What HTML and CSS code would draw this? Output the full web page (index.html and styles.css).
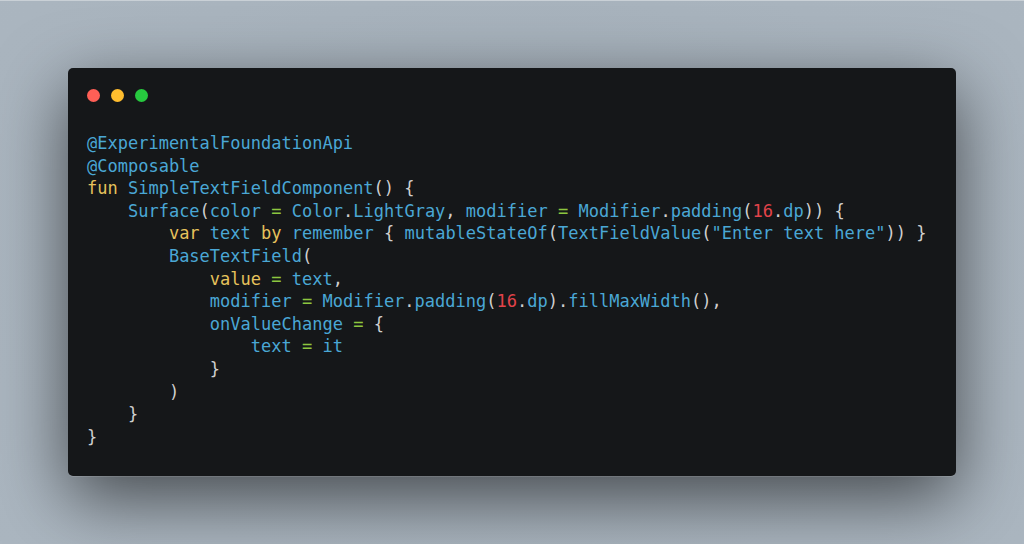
FILE: index.html
```html
<!DOCTYPE html>
<html>
<head>
<meta charset="utf-8">
<link rel="stylesheet" href="styles.css">
</head>
<body>
<div class="window">
  <div class="dots">
    <span class="dot red"></span>
    <span class="dot yellow"></span>
    <span class="dot green"></span>
  </div>
<pre class="code"><span class="b">@ExperimentalFoundationApi</span>
<span class="b">@Composable</span>
<span class="y">fun</span> <span class="b">SimpleTextFieldComponent</span><span class="p">() {</span>
    <span class="b">Surface</span><span class="p">(</span><span class="b">color</span> <span class="g">=</span> <span class="b">Color</span><span class="p">.</span><span class="b">LightGray</span><span class="p">,</span> <span class="b">modifier</span> <span class="g">=</span> <span class="b">Modifier</span><span class="p">.</span><span class="b">padding</span><span class="p">(</span><span class="r">16</span><span class="p">.</span><span class="b">dp</span><span class="p">)) {</span>
        <span class="y">var</span> <span class="b">text</span> <span class="y">by</span> <span class="b">remember</span> <span class="p">{</span> <span class="b">mutableStateOf</span><span class="p">(</span><span class="b">TextFieldValue</span><span class="p">(</span><span class="b">"Enter text here"</span><span class="p">)) }</span>
        <span class="b">BaseTextField</span><span class="p">(</span>
            <span class="y">value</span> <span class="g">=</span> <span class="b">text</span><span class="p">,</span>
            <span class="b">modifier</span> <span class="g">=</span> <span class="b">Modifier</span><span class="p">.</span><span class="b">padding</span><span class="p">(</span><span class="r">16</span><span class="p">.</span><span class="b">dp</span><span class="p">).</span><span class="b">fillMaxWidth</span><span class="p">(),</span>
            <span class="b">onValueChange</span> <span class="g">=</span> <span class="p">{</span>
                <span class="b">text</span> <span class="g">=</span> <span class="b">it</span>
            <span class="p">}</span>
        <span class="p">)</span>
    <span class="p">}</span>
<span class="p">}</span></pre>
</div>
</body>
</html>
```
FILE: styles.css
```css
html, body {
  margin: 0;
  padding: 0;
}
body {
  width: 1024px;
  height: 544px;
  overflow: hidden;
  background: radial-gradient(ellipse at 50% 40%, #a3aeb8 0%, #a9b4be 60%, #abb6c0 100%);
  border-top: 1px solid #c9d0d6;
  box-sizing: border-box;
  padding-top: 67px;
}
.window {
  margin-left: 68px;
  width: 888px;
  height: 408px;
  box-sizing: border-box;
  background: #151719;
  border-radius: 5px;
  box-shadow: 0 1px 0 rgba(255, 255, 255, 0.12), 0 22px 70px rgba(0, 0, 0, 0.6);
  padding: 21px 19px 0 19px;
}
.dots {
  display: flex;
  gap: 11px;
  height: 13px;
}
.dot {
  width: 13px;
  height: 13px;
  border-radius: 50%;
  display: block;
}
.red { background: #ff5f56; }
.yellow { background: #ffbd2e; }
.green { background: #27c93f; }
.code {
  margin: 30px 0 0 0;
  font-family: "DejaVu Sans Mono", monospace;
  font-size: 17px;
  line-height: 22.6px;
  color: #cfcfcf;
}
.b { color: #4aa7d5; }
.y { color: #e6c25c; }
.g { color: #8dc63f; }
.r { color: #e2434a; }
.p { color: #cfcfcf; }
```
